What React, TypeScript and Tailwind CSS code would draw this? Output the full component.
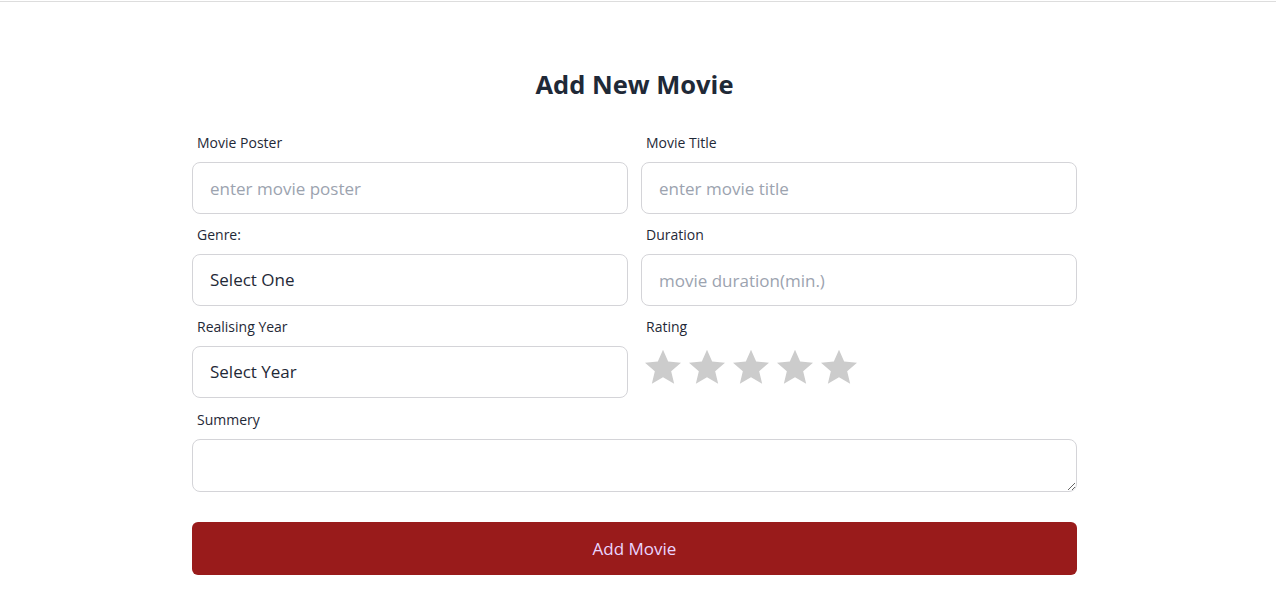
import React from 'react'

const Star = () => (
  <svg width="40" height="40" viewBox="0 0 24 24" className="fill-[#cccccc]">
    <path d="M12 1.6l3.1 7.1 7.7.7-5.9 5.1 1.8 7.6L12 18.1l-6.7 4 1.8-7.6L1.2 9.4l7.7-.7z" />
  </svg>
)

const inputCls =
  'block w-full h-[52px] rounded-lg border border-[#d4d4d8] bg-white px-[17px] text-[17px] text-[#1f2937] outline-none placeholder:text-[#9ca3af]'

const Field = ({ label, children }: { label: string; children: React.ReactNode }) => (
  <div>
    <label className="block pl-[5px] pb-[9px] text-[14px] leading-5 text-[#1f2937]">{label}</label>
    {children}
  </div>
)

const App = () => {
  return (
    <div className="min-h-[599px] bg-white border-t border-[#dddddd] mt-px" style={{ fontFamily: '"Open Sans", sans-serif' }}>
      <div className="w-[885px] ml-[192px] pt-[64px]">
        <h2 className="text-center text-[25.5px] leading-[36px] font-bold text-[#1f2937] mb-[31px]">Add New Movie</h2>
        <form>
          <div className="grid grid-cols-2 gap-x-[13px] gap-y-[11px]">
            <Field label="Movie Poster">
              <input type="text" placeholder="enter movie poster" className={inputCls} />
            </Field>
            <Field label="Movie Title">
              <input type="text" placeholder="enter movie title" className={inputCls} />
            </Field>
            <Field label="Genre:">
              <select className={inputCls + ' appearance-none'}>
                <option>Select One</option>
              </select>
            </Field>
            <Field label="Duration">
              <input type="text" placeholder="movie duration(min.)" className={inputCls} />
            </Field>
            <Field label="Realising Year">
              <select className={inputCls + ' appearance-none'}>
                <option>Select Year</option>
              </select>
            </Field>
            <Field label="Rating">
              <div className="flex gap-[4px] pl-[2px] pt-[1px]">
                <Star />
                <Star />
                <Star />
                <Star />
                <Star />
              </div>
            </Field>
            <div className="col-span-2 mt-px">
              <Field label="Summery">
                <textarea className="block w-full h-[53px] rounded-lg border border-[#d4d4d8] bg-white px-[17px] py-2 text-[17px] outline-none" />
              </Field>
            </div>
          </div>
          <button
            type="submit"
            className="mt-[30px] w-full h-[53px] rounded-md bg-[#991b1b] text-[17px] text-[#e9d5ff]"
          >
            Add Movie
          </button>
        </form>
      </div>
    </div>
  )
}

export default App
